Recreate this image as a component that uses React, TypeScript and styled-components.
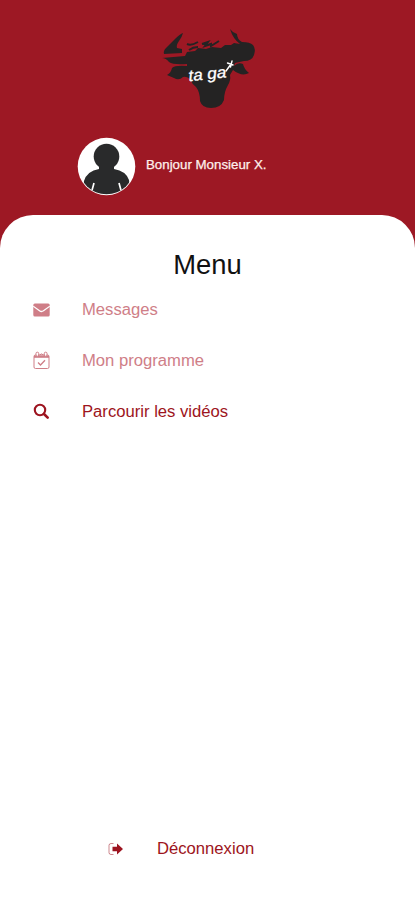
import React from 'react';
import styled, { createGlobalStyle } from 'styled-components';

const GlobalStyle = createGlobalStyle`
  * { box-sizing: border-box; }
  body { margin: 0; background: #fff; font-family: "Liberation Sans", Arial, sans-serif; }
`;

const Screen = styled.div`
  display: flex;
  flex-direction: column;
  width: 100%;
  height: 900px;
  overflow: hidden;
  background: #9d1824;
`;

const Header = styled.header`
  display: flex;
  flex-direction: column;
  height: 215px;
  flex-shrink: 0;
  padding-top: 26px;
`;

const Logo = styled.svg`
  width: 110px;
  height: 90px;
  margin-left: 155px;
`;

const LogoText = styled.text`
  font-family: "Liberation Sans", Arial, sans-serif;
  font-size: 16px;
  font-style: italic;
  fill: #fff;
  stroke: #fff;
  stroke-width: 0.3;
`;

const Profile = styled.div`
  display: flex;
  align-items: center;
  gap: 10px;
  margin: 21px 0 0 77px;
`;

const Avatar = styled.svg`
  width: 59px;
  height: 59px;
`;

const Greeting = styled.span`
  color: #fff0ec;
  font-size: 13.3px;
  line-height: 16px;
  margin-top: -4px;
  -webkit-text-stroke: 0.25px #fff0ec;
`;

const Panel = styled.main`
  display: flex;
  flex-direction: column;
  flex: 1;
  background: #fff;
  border-radius: 33px 33px 0 0;
`;

const Title = styled.h1`
  margin: 33px 0 0;
  font-size: 27.4px;
  font-weight: 400;
  line-height: 34px;
  text-align: center;
  color: #111;
`;

const Nav = styled.nav`
  display: flex;
  flex-direction: column;
  margin-top: 2px;
`;

const Item = styled.a<{ $tone: string; $inset?: number }>`
  display: flex;
  align-items: center;
  height: 51px;
  padding-left: ${(p) => p.$inset ?? 33}px;
  color: ${(p) => p.$tone};
  font-size: 16.65px;
  line-height: 20px;
`;

const IconSlot = styled.span`
  display: flex;
  align-items: center;
  width: 49px;
  height: 20px;
`;

const Footer = styled.footer`
  margin-top: auto;
  padding-bottom: 26px;
`;

const BullLogo = () => (
  <Logo viewBox="0 0 110 90" role="img" aria-label="ta ga">
    <g fill="#242323">
      <path d="M28 7 Q25 8 20 13 L11 22 Q8 25 9 28 L27 27 L27 23 L22 22 Q21 19 24 15 Q27 11 28 7Z" />
      <path d="M75 3 Q78 7 82 8 Q82 13 87 16 Q95 16 98 19 Q101 23 99 29 Q97 35 89 35 L80 37 L79 40 Q83 36 88 38 Q89 43 94 47 Q87 51 78 44 L75 49 Q76 54 73 59 Q69 66 69 74 Q66 82 56 82 Q47 82 45 75 Q45 66 41 61 Q37 58 35 53 Q31 50 28 51 Q24 55 19 52 L12 49 Q16 47 17 42 Q20 39 32 40 L32 38 Q18 39 14 36 Q11 32 7 32 L30 30 L32 26 L40 25 L43 22 L51 23 L57 21 L66 22 L70 19 L76 19 L79 17 L85 18 Q78 13 75 3Z" />
    </g>
    <path d="M32 18 Q36 20 43 16 M34 24 Q38 21 43 21 M47 18 L53 16 L50 20 L56 18 L56 20 L64 15" fill="none" stroke="#242323" strokeWidth="2" />
    <LogoText x="33" y="53" textLength="38" lengthAdjust="spacingAndGlyphs" transform="rotate(-6 54 45)">ta ga</LogoText>
    <path d="M71 45 L76 38 M72.5 37 L78 39 M77 35 L75.5 41" fill="none" stroke="#fff" strokeWidth="1.4" strokeLinecap="round" />
  </Logo>
);

const UserPortrait = () => (
  <Avatar viewBox="0 0 59 59" aria-hidden="true">
    <defs>
      <clipPath id="portrait"><circle cx="29.5" cy="29.5" r="27.8" /></clipPath>
    </defs>
    <circle cx="29.5" cy="29.5" r="28.8" fill="#fff" />
    <g fill="#292a2b" clipPath="url(#portrait)">
      <circle cx="29.5" cy="19.5" r="12.8" />
      <path d="M22 27 V32 Q10 34 7 44 L5 59 H54 L52 43 Q49 34 37 32 V27Z" />
      <path d="M17 46 L14 57 M42 46 L45 57" stroke="#fff" strokeWidth="1.7" />
    </g>
  </Avatar>
);

const Envelope = () => (
  <svg width="17" height="14" viewBox="0 0 17 14">
    <rect x=".3" y=".5" width="16.4" height="13" rx="1.5" fill="currentColor" />
    <path d="M.2 3.2 L6.5 7.8 Q8.5 9.2 10.5 7.8 L16.8 3.2" fill="none" stroke="#fff" strokeWidth="1.3" />
  </svg>
);

const Magnifier = () => (
  <svg width="17" height="17" viewBox="0 0 17 17" fill="none" stroke="currentColor" strokeLinecap="round">
    <circle cx="7" cy="7" r="5.2" strokeWidth="2.1" />
    <path d="M11 11 L14.7 14.7" strokeWidth="2.6" />
  </svg>
);

const CalendarCheck = () => (
  <svg width="17" height="19" viewBox="0 0 17 19" fill="none" stroke="currentColor">
    <rect x="1" y="4" width="15" height="13.5" rx="1.5" strokeWidth="1" />
    <path d="M1 4.5H16V6.8H1Z" fill="currentColor" stroke="none" />
    <rect x="3" y="1.2" width="2.7" height="4" rx="1.2" fill="#fff" />
    <rect x="11.3" y="1.2" width="2.7" height="4" rx="1.2" fill="#fff" />
    <path d="M6.5 4 Q8.5 1.8 10.5 4" />
    <path d="M5 11.5 L7.5 14 L12 9.3" strokeWidth="1.3" />
  </svg>
);

const SignOut = () => (
  <svg width="16" height="14" viewBox="0 0 16 14">
    <path d="M5.5 1.5 H3 Q1 1.5 1 3.5 V10.5 Q1 12.5 3 12.5 H5.5" fill="none" stroke="currentColor" strokeWidth="1" opacity=".5" />
    <path d="M4.5 4.8 H9 V1.5 L15 7 L9 12.5 V9.2 H4.5Z" fill="currentColor" />
  </svg>
);

export default function App() {
  return (
    <>
      <GlobalStyle />
      <Screen>
        <Header>
          <BullLogo />
          <Profile>
            <UserPortrait />
            <Greeting>Bonjour Monsieur X.</Greeting>
          </Profile>
        </Header>
        <Panel>
          <Title>Menu</Title>
          <Nav>
            <Item $tone="#cf7e87"><IconSlot><Envelope /></IconSlot>Messages</Item>
            <Item $tone="#cf7e87"><IconSlot><CalendarCheck /></IconSlot>Mon programme</Item>
            <Item $tone="#9d1420"><IconSlot><Magnifier /></IconSlot>Parcourir les vidéos</Item>
          </Nav>
          <Footer>
            <Item $tone="#9d1420" $inset={108}><IconSlot><SignOut /></IconSlot>Déconnexion</Item>
          </Footer>
        </Panel>
      </Screen>
    </>
  );
}
